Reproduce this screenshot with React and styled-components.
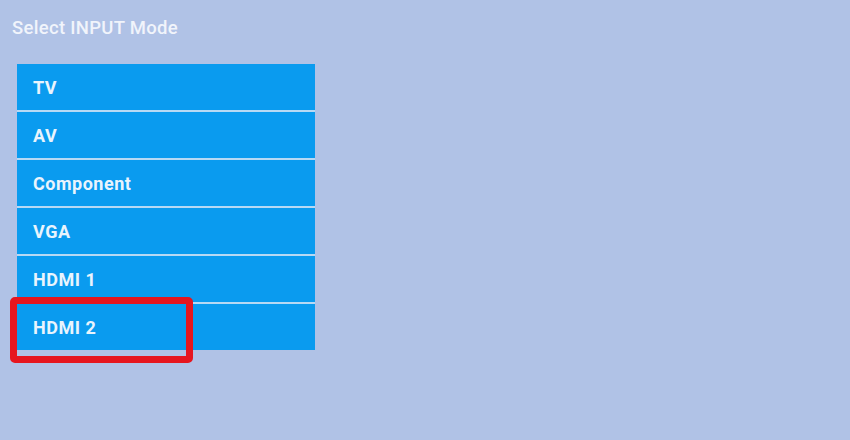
import React from "react";
import styled, { createGlobalStyle } from "styled-components";

const GlobalStyle = createGlobalStyle`
	html, body {
		margin: 0;
		padding: 0;
		background: #b0c2e6;
	}
	body {
		font-family: "Roboto", "Liberation Sans", sans-serif;
	}
`;

const Screen = styled.div`
	width: 850px;
	height: 440px;
	background: #b0c2e6;
	padding: 16px 0 0 12px;
	box-sizing: border-box;
`;

const Title = styled.h1`
	margin: 0 0 23px 0;
	font-size: 18.5px;
	font-weight: 500;
	color: #f1f4fb;
	letter-spacing: 0.3px;
	line-height: 25px;
`;

const Menu = styled.ul`
	list-style: none;
	margin: 0 0 0 5px;
	padding: 0;
	width: 298px;
	display: flex;
	flex-direction: column;
	gap: 2px;
	background: #b7d9f4;
	position: relative;
`;

const Item = styled.li`
	height: 46px;
	display: flex;
	align-items: center;
	padding-left: 16px;
	background: #0a9bef;
	color: #e9f4fd;
	font-size: 18px;
	font-weight: 700;
	letter-spacing: 0.5px;
	position: relative;
`;

const Highlight = styled.span`
	position: absolute;
	left: -7px;
	top: -7px;
	width: 183px;
	height: 66px;
	border: 7px solid #e6161f;
	border-radius: 5px;
	box-sizing: border-box;
	pointer-events: none;
`;

const modes = ["TV", "AV", "Component", "VGA", "HDMI 1", "HDMI 2"];

export default function App() {
	return (
		<Screen>
			<GlobalStyle />
			<Title>Select INPUT Mode</Title>
			<Menu>
				{modes.map((m) => (
					<Item key={m}>
						{m}
						{m === "HDMI 2" && <Highlight />}
					</Item>
				))}
			</Menu>
		</Screen>
	);
}
